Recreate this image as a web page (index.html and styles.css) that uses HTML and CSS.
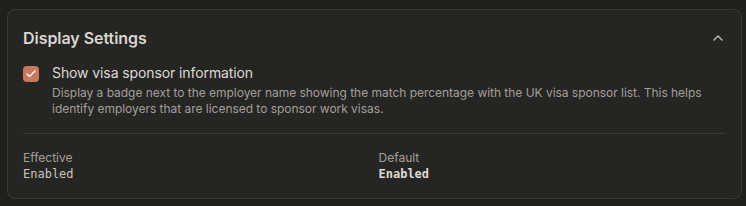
FILE: index.html
```html
<!DOCTYPE html>
<html>
<head>
<meta charset="utf-8">
<link rel="stylesheet" href="styles.css">
</head>
<body>
<div class="page">
  <section class="card">
    <header class="card-head">
      <h2 class="title">Display Settings</h2>
      <svg class="chev" width="16" height="16" viewBox="0 0 24 24" fill="none" stroke="currentColor" stroke-width="2" stroke-linecap="round" stroke-linejoin="round"><path d="m18 15-6-6-6 6"/></svg>
    </header>
    <div class="option">
      <span class="checkbox">
        <svg width="12" height="12" viewBox="0 0 24 24" fill="none" stroke="#fff" stroke-width="2.5" stroke-linecap="round" stroke-linejoin="round"><path d="M20 6 9 17l-5-5"/></svg>
      </span>
      <div class="option-text">
        <div class="option-label">Show visa sponsor information</div>
        <p class="option-desc">Display a badge next to the employer name showing the match percentage with the UK visa sponsor list. This helps identify employers that are licensed to sponsor work visas.</p>
      </div>
    </div>
    <div class="divider"></div>
    <div class="values">
      <div class="val">
        <div class="val-label">Effective</div>
        <div class="val-value">Enabled</div>
      </div>
      <div class="val">
        <div class="val-label">Default</div>
        <div class="val-value strong">Enabled</div>
      </div>
    </div>
  </section>
</div>
</body>
</html>
```

FILE: styles.css
```css
html, body {
  margin: 0;
  padding: 0;
  background: #1f1f1d;
}
body {
  font-family: Inter, "Noto Sans", sans-serif;
  color: #d9d6cf;
}
.page {
  padding: 9px 4px 7px 7px;
}
.card {
  background: #252523;
  border: 1px solid #393936;
  border-radius: 8px;
  padding: 16px 15px 16px 15px;
}
.card-head {
  display: flex;
  align-items: center;
  justify-content: space-between;
}
.title {
  margin: 0;
  font-size: 16px;
  line-height: 24px;
  font-weight: 600;
  letter-spacing: -0.05px;
  color: #d9d6cf;
}
.chev {
  color: #c4c1ba;
  display: block;
}
.option {
  display: flex;
  align-items: flex-start;
  gap: 13px;
  margin-top: 13px;
}
.checkbox {
  flex: none;
  width: 16px;
  height: 16px;
  margin-top: 3px;
  border-radius: 4px;
  background: #c8785b;
  display: flex;
  align-items: center;
  justify-content: center;
}
.checkbox svg { display: block; }
.option-text { flex: 1; }
.option-label {
  font-size: 14px;
  line-height: 20px;
  font-weight: 400;
  letter-spacing: -0.1px;
  color: #dedbd4;
}
.option-desc {
  margin: 2px 0 0;
  font-size: 12px;
  line-height: 16px;
  letter-spacing: -0.03px;
  color: #a3a09a;
}
.divider {
  height: 1px;
  background: #393936;
  margin-top: 16px;
}
.values {
  display: grid;
  grid-template-columns: 1fr 1fr;
  gap: 8px;
  margin-top: 16px;
}
.val-label {
  font-size: 12px;
  line-height: 16px;
  color: #a3a09a;
}
.val-value {
  font-family: "DejaVu Sans Mono", monospace;
  font-size: 12px;
  line-height: 16px;
  color: #c9c6bf;
}
.val-value.strong {
  font-weight: 700;
  color: #dedbd4;
}
```
